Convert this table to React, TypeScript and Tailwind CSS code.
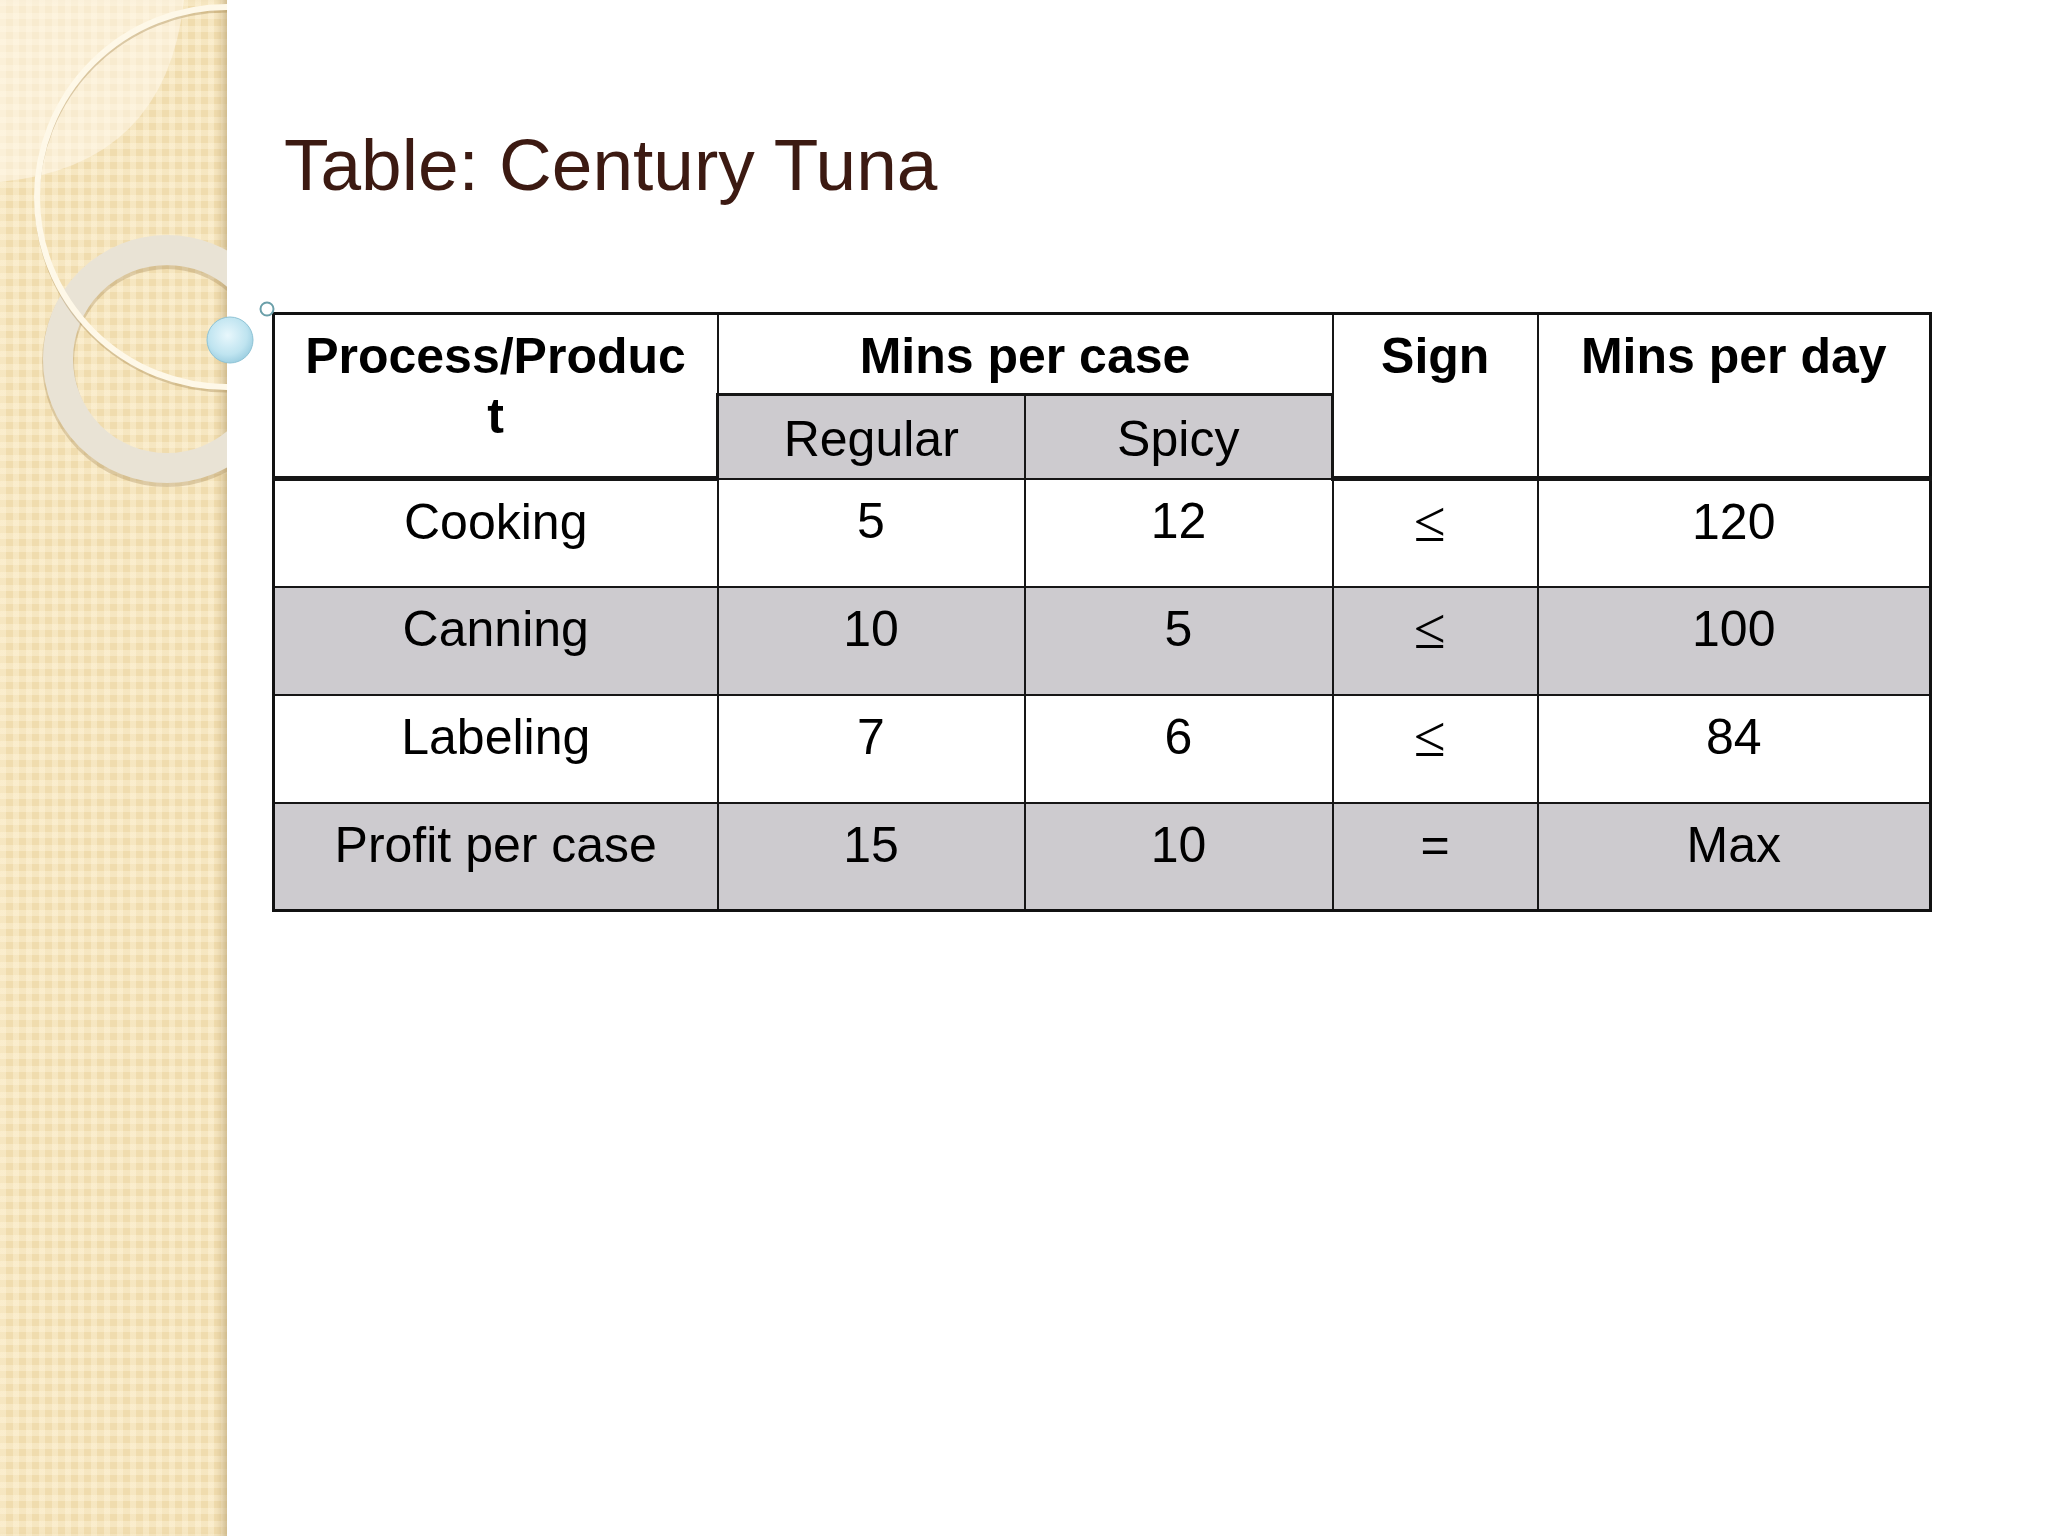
import React from "react";

const ROWS = [
  { name: "Cooking", regular: "5", spicy: "12", sign: "≤", day: "120", gray: false },
  { name: "Canning", regular: "10", spicy: "5", sign: "≤", day: "100", gray: true },
  { name: "Labeling", regular: "7", spicy: "6", sign: "≤", day: "84", gray: false },
  { name: "Profit per case", regular: "15", spicy: "10", sign: "=", day: "Max", gray: true },
];

function Decor() {
  return (
    <svg
      className="absolute left-0 top-0 pointer-events-none"
      width={290}
      height={500}
      viewBox="0 0 290 500"
    >
      <defs>
        <clipPath id="strip">
          <rect x={0} y={0} width={227} height={500} />
        </clipPath>
        <radialGradient id="ball" cx="45%" cy="40%" r="60%">
          <stop offset="0%" stopColor="#e8f7fc" />
          <stop offset="70%" stopColor="#bfe4f0" />
          <stop offset="100%" stopColor="#9fd0e2" />
        </radialGradient>
      </defs>
      <g clipPath="url(#strip)">
        <path d="M0 0 H184 Q166 166 0 182 Z" fill="#fffaf0" fillOpacity={0.5} />
        <circle cx={167} cy={362} r={109} fill="none" stroke="#a88d5c" strokeOpacity={0.35} strokeWidth={32} />
        <circle cx={167} cy={359} r={109} fill="none" stroke="#e9e3d5" strokeWidth={30} />
        <circle cx={227} cy={200} r={190} fill="none" stroke="#a98c55" strokeOpacity={0.4} strokeWidth={5} />
        <circle cx={227} cy={197} r={190} fill="none" stroke="#fef8e8" strokeWidth={6} />
      </g>
      <circle cx={230} cy={340} r={23} fill="url(#ball)" stroke="#8ec3d5" strokeWidth={1} />
      <circle cx={267} cy={309} r={6.5} fill="#ffffff" stroke="#6a9fa9" strokeWidth={2} />
    </svg>
  );
}

export default function App() {
  const cell = "border-2 border-[#161616] align-top pt-[11px] text-[50px] leading-[60px]";
  return (
    <div className="relative flex h-screen w-full overflow-hidden bg-white font-['Liberation_Sans',Arial,sans-serif]">
      <div className="w-[227px] shrink-0 bg-[#f0dcae] bg-[image:linear-gradient(90deg,rgba(255,246,222,0.4)_50%,transparent_50%),linear-gradient(rgba(255,246,222,0.4)_50%,transparent_50%)] bg-[length:13px_13px] shadow-[inset_-10px_0_8px_-6px_rgba(160,130,70,0.5)]" />
      <div className="pl-[45px] pt-[128px]">
        <h1 className="ml-[12px] text-[73px] leading-[73px] text-[#3c1a12]">Table: Century Tuna</h1>
        <table className="mt-[111px] w-[1657px] table-fixed border-collapse border-[3px] border-[#111] text-center text-black">
          <colgroup>
            <col className="w-[444px]" />
            <col className="w-[307px]" />
            <col className="w-[308px]" />
            <col className="w-[205px]" />
            <col className="w-[393px]" />
          </colgroup>
          <thead>
            <tr className="h-[81px]">
              <th rowSpan={2} className={`${cell} border-b-[5px] px-[24px] font-bold break-all`}>
                Process/Product
              </th>
              <th colSpan={2} className={`${cell} font-bold`}>
                Mins per case
              </th>
              <th rowSpan={2} className={`${cell} border-b-[5px] font-bold`}>
                Sign
              </th>
              <th rowSpan={2} className={`${cell} border-b-[5px] font-bold`}>
                Mins per day
              </th>
            </tr>
            <tr className="h-[84px]">
              <th className={`${cell} border-t-[3px] border-l-[3px] bg-[#cdcbcf] font-normal pt-[13px]`}>Regular</th>
              <th className={`${cell} border-t-[3px] border-r-[3px] bg-[#cdcbcf] font-normal pt-[13px]`}>Spicy</th>
            </tr>
          </thead>
          <tbody>
            {ROWS.map((r) => (
              <tr key={r.name} className={`h-[108px] ${r.gray ? "bg-[#cdcbcf]" : "bg-white"}`}>
                <td className={cell}>{r.name}</td>
                <td className={cell}>{r.regular}</td>
                <td className={cell}>{r.spicy}</td>
                <td className={cell}>
                  {r.sign === "≤" ? (
                    <span className="inline-block pr-[10px] font-['Liberation_Serif',serif] text-[58px]">≤</span>
                  ) : (
                    r.sign
                  )}
                </td>
                <td className={cell}>{r.day}</td>
              </tr>
            ))}
          </tbody>
        </table>
      </div>
      <Decor />
    </div>
  );
}
